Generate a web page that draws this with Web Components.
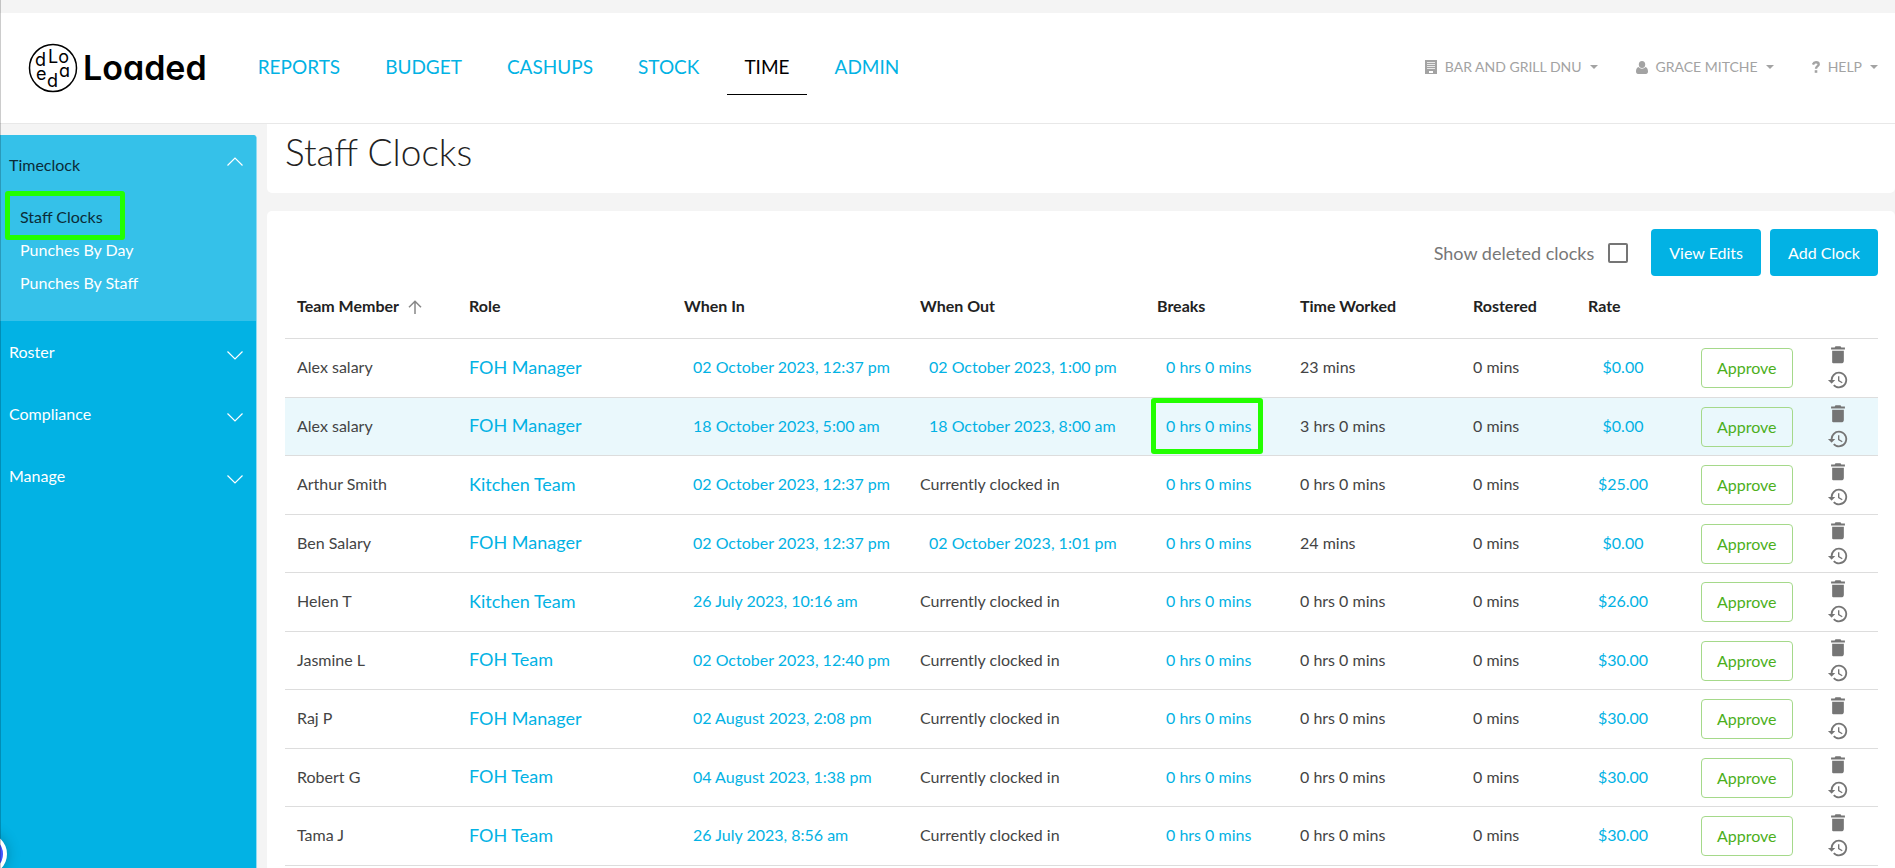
<!DOCTYPE html>
<html lang="en">
<head>
<meta charset="utf-8">
<title>Staff Clocks - Loaded</title>
<meta name="viewport" content="width=device-width, initial-scale=1">
<style>
  html, body {
    height: 100%;
  }
  body {
    --blue: #02b2e4;
    --blue-light: #35c1e9;
    --grey: #f4f4f4;
    --mark: #22ff00;
    margin: 0;
    overflow: hidden;
    background: var(--grey);
    color: #222;
    font: 16px/20px Lato, "Liberation Sans", sans-serif;
  }
  body::before {
    content: '';
    position: fixed;
    z-index: 2;
    inset: 0 auto 0 0;
    width: 1px;
    background: rgba(0, 0, 0, .2);
  }
</style>
</head>
<body>

<x-shell>
  <x-header slot="header">
    <x-logo slot="logo"></x-logo>
    <x-tab>Reports</x-tab>
    <x-tab>Budget</x-tab>
    <x-tab>Cashups</x-tab>
    <x-tab>Stock</x-tab>
    <x-tab active>Time</x-tab>
    <x-tab>Admin</x-tab>
    <x-menu slot="menus" icon="building">Bar and Grill DNU</x-menu>
    <x-menu slot="menus" icon="user">Grace Mitche</x-menu>
    <x-menu slot="menus" icon="help">Help</x-menu>
  </x-header>
  <x-sidebar slot="side">
    <x-section label="Timeclock" open>
      <x-link active marked>Staff Clocks</x-link>
      <x-link>Punches By Day</x-link>
      <x-link>Punches By Staff</x-link>
    </x-section>
    <x-section label="Roster"></x-section>
    <x-section label="Compliance"></x-section>
    <x-section label="Manage"></x-section>
  </x-sidebar>
  <x-title>Staff Clocks</x-title>
  <x-clocks></x-clocks>
</x-shell>
<x-chat></x-chat>

<script>
const ICONS = {
  building: '<svg width="12" height="14" viewBox="0 0 12 14"><path fill="currentColor" d="M0 0h12v14H0z"/><path stroke="#fff" stroke-opacity=".75" d="M2 2.500h8M2 4.500h8M2 6.500h8M2 8.500h8"/><path fill="#fff" d="M4 11h4v2H4z"/></svg>',
  user: '<svg width="12" height="13" viewBox="0 0 12 13"><g fill="currentColor"><ellipse cx="6" cy="3.500" rx="3.200" ry="3.500"/><path d="M2.500 6C1 6.500 0 8 0 10.500 0 12 .8 13 2 13h8c1.200 0 2-1 2-2.500C12 8 11 6.500 9.500 6 8.500 7.300 7.400 7.700 6 7.700S3.500 7.300 2.500 6z"/></g></svg>',
  help: '<svg width="8" height="12" viewBox="0 0 8 12"><path fill="none" stroke="currentColor" stroke-width="2.400" d="M1 3.600C1.500 2 2.500 1.300 4 1.300c1.700 0 2.700.8 2.700 2.100C6.700 5.200 4 5.200 4 7.800"/><path fill="currentColor" d="M2.700 9.200h2.600v2.600H2.700z"/></svg>',
  trash: '<svg width="20" height="20" viewBox="0 0 24 24"><path fill="currentColor" d="M5 21V7h14v12c0 1.800-.9 3-2 3H7c-1.100 0-2-.4-2-1zM20.300 5.500V3H16l-1-1.500H9L8 3H3.700v2.500h16.600z"/></svg>',
  history: '<svg width="22" height="22" viewBox="0 0 24 24"><path fill="currentColor" d="M13 3a9 9 0 0 0-9 9H1l3.890 3.890.07.14L9 12H6a7 7 0 1 1 2.060 4.940l-1.420 1.420A9 9 0 1 0 13 3zm-1 5v5l4.280 2.540.72-1.210-3.500-2.080V8H12z"/></svg>',
  arrow: '<svg width="14" height="14" viewBox="0 0 14 14"><path fill="none" stroke="#888" stroke-width="1.500" d="M7 14V1.500M1 7.200 7 1.200l6 6"/></svg>',
  chevron: '<svg width="16" height="16" viewBox="0 0 16 16"><path fill="none" stroke="currentColor" stroke-width="1.200" d="m.5 7.500 7.500 7.500 7.500-7.500"/></svg>'
};

const define = (name, render) => {
  customElements.define(name, class extends HTMLElement {
    constructor() {
      super();
      this.attachShadow({ mode: 'open' }).innerHTML = render(this);
    }
  });
};

define('x-shell', () => `
  <style>
    :host {
      display: flex;
      flex-direction: column;
      height: 100%;
    }
    .body {
      flex: 1;
      min-height: 0;
      display: grid;
      grid-template-columns: 257px minmax(0, 1fr);
      column-gap: 10px;
    }
    .side {
      display: grid;
      padding-top: 11px;
    }
    main {
      display: flex;
      flex-direction: column;
      gap: 18px;
    }
  </style>
  <slot name="header"></slot>
  <div class="body">
    <div class="side"><slot name="side"></slot></div>
    <main><slot></slot></main>
  </div>
`);

define('x-header', () => `
  <style>
    :host {
      display: block;
      padding-top: 13px;
    }
    header {
      display: flex;
      align-items: center;
      height: 110px;
      padding: 0 17px 0 28px;
      background: #fff;
      border-bottom: 1px solid #e8e8e8;
    }
    nav {
      display: flex;
      gap: 11px;
      margin-left: 34px;
    }
    .menus {
      display: flex;
      gap: 38px;
      margin-left: auto;
      padding-bottom: 2px;
    }
  </style>
  <header>
    <slot name="logo"></slot>
    <nav><slot></slot></nav>
    <div class="menus"><slot name="menus"></slot></div>
  </header>
`);

define('x-logo', () => `
  <style>
    :host { display: block; }
    a {
      display: flex;
      align-items: center;
      gap: 5px;
      color: #000;
      text-decoration: none;
    }
    svg, span {
      font-family: Inter, sans-serif;
      font-feature-settings: 'cv11';
    }
    svg { font-size: 18px; }
    span {
      font-size: 34px;
      line-height: 48px;
      font-weight: 600;
    }
  </style>
  <a href="#">
    <svg width="50" height="50" viewBox="0 0 50 50" aria-hidden="true">
      <circle cx="25" cy="25" r="23.500" fill="none" stroke="#000" stroke-width="1.500"/>
      <text x="7" y="23">d</text>
      <text x="20" y="20">Lo</text>
      <text x="31" y="34">a</text>
      <text x="19" y="44">d</text>
      <text x="8" y="37">e</text>
    </svg>
    <span>Loaded</span>
  </a>
`);

define('x-tab', el => `
  <style>
    :host { display: block; }
    a {
      display: block;
      padding: 15px 17px 17px;
      border-bottom: 1px solid transparent;
      color: var(--blue);
      font-size: 19px;
      line-height: 20px;
      text-transform: uppercase;
      text-decoration: none;
    }
    .active {
      border-color: #000;
      color: #000;
    }
  </style>
  <a href="#" class="${ el.hasAttribute('active') ? 'active' : '' }"><slot></slot></a>
`);

define('x-menu', el => `
  <style>
    :host { display: block; }
    button {
      display: flex;
      align-items: center;
      gap: 8px;
      padding: 0;
      border: 0;
      background: none;
      color: #a3a3a3;
      font: 14px/20px Lato, sans-serif;
      text-transform: uppercase;
      cursor: pointer;
    }
    i {
      border: 4px solid transparent;
      border-top-color: currentColor;
      border-bottom: 0;
    }
  </style>
  <button type="button">${ ICONS[el.getAttribute('icon')] }<slot></slot><i></i></button>
`);

define('x-sidebar', () => `
  <style>
    :host {
      display: block;
      background: var(--blue);
      border-right: 1px solid #8fdcf3;
      border-top-right-radius: 4px;
      overflow: hidden;
    }
  </style>
  <nav><slot></slot></nav>
`);

define('x-section', el => {
  const open = el.hasAttribute('open');
  return `
    <style>
      :host { display: block; }
      button {
        display: flex;
        align-items: center;
        justify-content: space-between;
        width: 100%;
        height: 62px;
        padding: 0 13px 0 9px;
        border: 0;
        background: none;
        color: #fff;
        font: 16px/20px Lato, sans-serif;
        cursor: pointer;
      }
      svg { color: #fff; }
      .open {
        padding-bottom: 22px;
        background: var(--blue-light);
      }
      .open button {
        height: 60px;
        color: #0b2c38;
      }
      .open svg { rotate: 180deg; }
      .links {
        display: flex;
        flex-direction: column;
        padding: 5px 0 0 20px;
      }
    </style>
    <section class="${ open ? 'open' : '' }">
      <button type="button" aria-expanded="${ open }">${ el.getAttribute('label') }${ ICONS.chevron }</button>
      ${ open ? '<div class="links"><slot></slot></div>' : '' }
    </section>
  `;
});

define('x-link', el => `
  <style>
    :host {
      display: block;
      line-height: 33px;
    }
    a {
      position: relative;
      display: inline-block;
      color: #fff;
      text-decoration: none;
    }
    .active { color: #0b2c38; }
    .marked::after {
      content: '';
      position: absolute;
      inset: -9px -22px -7px -15px;
      border: 5px solid var(--mark);
      border-radius: 3px;
    }
  </style>
  <a href="#" class="${ el.hasAttribute('active') ? 'active' : '' } ${ el.hasAttribute('marked') ? 'marked' : '' }"><slot></slot></a>
`);

define('x-title', () => `
  <style>
    :host {
      display: block;
      padding: 6px 18px 19px;
      background: #fff;
      border-radius: 0 0 5px 5px;
    }
    h1 {
      margin: 0;
      font-size: 37px;
      line-height: 44px;
      font-weight: 300;
    }
  </style>
  <h1><slot></slot></h1>
`);

define('x-button', () => `
  <style>
    :host { display: block; }
    button {
      height: 47px;
      padding: 0 18px;
      border: 0;
      border-radius: 4px;
      background: var(--blue);
      color: #fff;
      font: 16px/20px Lato, sans-serif;
      cursor: pointer;
    }
  </style>
  <button type="button"><slot></slot></button>
`);

customElements.define('x-clocks', class extends HTMLElement {
  constructor() {
    super();
    this.attachShadow({ mode: 'open' }).innerHTML = `
      <style>
        :host {
          display: block;
          flex: 1;
          padding: 18px 17px 0 18px;
          background: #fff;
          border-radius: 5px 5px 0 0;
        }
        .tools {
          display: flex;
          align-items: center;
          justify-content: flex-end;
          gap: 9px;
        }
        label {
          display: flex;
          align-items: center;
          gap: 14px;
          margin-right: 14px;
          color: #777;
          font-size: 18px;
        }
        input {
          appearance: none;
          width: 20px;
          height: 20px;
          margin: 0;
          border: 2px solid #757575;
          border-radius: 2px;
        }
        table {
          width: 100%;
          table-layout: fixed;
          border-collapse: separate;
          border-spacing: 0;
        }
        th, td {
          box-sizing: border-box;
          padding: 0 0 2px 12px;
          border-bottom: 1px solid #ddd;
          text-align: left;
          white-space: nowrap;
        }
        th {
          height: 63px;
          font-weight: 700;
        }
        th svg {
          margin-left: 9px;
          vertical-align: -2px;
        }
        td {
          height: 59px;
          color: #444;
        }
        td:nth-child(n + 9) { padding-bottom: 0; }
        tr:nth-child(even) td { height: 58px; }
        .current td { background: #eaf8fc; }
        a {
          color: var(--blue);
          font-size: 18px;
          text-decoration: none;
        }
        button {
          padding: 0 9px;
          border: 0;
          background: none;
          color: var(--blue);
          font: inherit;
          cursor: pointer;
        }
        .rate { min-width: 70px; }
        .marked { position: relative; }
        .marked::after {
          content: '';
          position: absolute;
          inset: -18px -3px -18px -6px;
          border: 5px solid var(--mark);
          border-radius: 3px;
        }
        .approve {
          height: 40px;
          padding: 0 15px;
          border: 1px solid #a5d98a;
          border-radius: 4px;
          color: #4caf1c;
        }
        .icons {
          display: flex;
          flex-direction: column;
          align-items: flex-start;
          gap: 4px;
        }
        .icons button {
          display: flex;
          justify-content: center;
          width: 24px;
          padding: 0;
          color: #757575;
        }
      </style>
      <div class="tools">
        <label for="deleted">Show deleted clocks <input type="checkbox" id="deleted"></label>
        <x-button>View Edits</x-button>
        <x-button>Add Clock</x-button>
      </div>
      <table>
        <colgroup>${ this._widths.map(w => `<col style="width: ${ w }px">`).join('') }</colgroup>
        <thead>
          <tr>
            <th scope="col">Team Member${ ICONS.arrow }</th>
            <th scope="col">Role</th>
            <th scope="col">When In</th>
            <th scope="col">When Out</th>
            <th scope="col">Breaks</th>
            <th scope="col">Time Worked</th>
            <th scope="col">Rostered</th>
            <th scope="col">Rate</th>
            <th></th>
            <th></th>
          </tr>
        </thead>
        <tbody>${ this._clocks.map((clock, i) => this._row(clock, i === 1)).join('') }</tbody>
      </table>
    `;
  }
  get _widths() {
    return [172, 215, 236, 237, 143, 173, 115, 113, 125, 64];
  }
  get _clocks() {
    return [
      ['Alex salary', 'FOH Manager', '02 October 2023, 12:37 pm', '02 October 2023, 1:00 pm', '23 mins', '$0.00'],
      ['Alex salary', 'FOH Manager', '18 October 2023, 5:00 am', '18 October 2023, 8:00 am', '3 hrs 0 mins', '$0.00'],
      ['Arthur Smith', 'Kitchen Team', '02 October 2023, 12:37 pm', '', '0 hrs 0 mins', '$25.00'],
      ['Ben Salary', 'FOH Manager', '02 October 2023, 12:37 pm', '02 October 2023, 1:01 pm', '24 mins', '$0.00'],
      ['Helen T', 'Kitchen Team', '26 July 2023, 10:16 am', '', '0 hrs 0 mins', '$26.00'],
      ['Jasmine L', 'FOH Team', '02 October 2023, 12:40 pm', '', '0 hrs 0 mins', '$30.00'],
      ['Raj P', 'FOH Manager', '02 August 2023, 2:08 pm', '', '0 hrs 0 mins', '$30.00'],
      ['Robert G', 'FOH Team', '04 August 2023, 1:38 pm', '', '0 hrs 0 mins', '$30.00'],
      ['Tama J', 'FOH Team', '26 July 2023, 8:56 am', '', '0 hrs 0 mins', '$30.00']
    ];
  }
  _row([name, role, start, end, worked, rate], current) {
    return `
      <tr class="${ current ? 'current' : '' }">
        <td>${ name }</td>
        <td><a href="#">${ role }</a></td>
        <td><button type="button">${ start }</button></td>
        <td>${ end ? `<button type="button">${ end }</button>` : 'Currently clocked in' }</td>
        <td><button type="button" class="${ current ? 'marked' : '' }">0 hrs 0 mins</button></td>
        <td>${ worked }</td>
        <td>0 mins</td>
        <td><button type="button" class="rate">${ rate }</button></td>
        <td><button type="button" class="approve">Approve</button></td>
        <td>
          <div class="icons">
            <button type="button" aria-label="Delete">${ ICONS.trash }</button>
            <button type="button" aria-label="History">${ ICONS.history }</button>
          </div>
        </td>
      </tr>
    `;
  }
});

define('x-chat', () => `
  <style>
    :host {
      position: fixed;
      left: -35px;
      bottom: -7px;
    }
    button {
      display: block;
      width: 42px;
      height: 42px;
      border: 4px solid #fff;
      border-radius: 50%;
      background: #4255ff;
      box-shadow: 0 0 14px rgba(0, 0, 0, .25);
    }
  </style>
  <button type="button" aria-label="Chat"></button>
`);
</script>
</body>
</html>
